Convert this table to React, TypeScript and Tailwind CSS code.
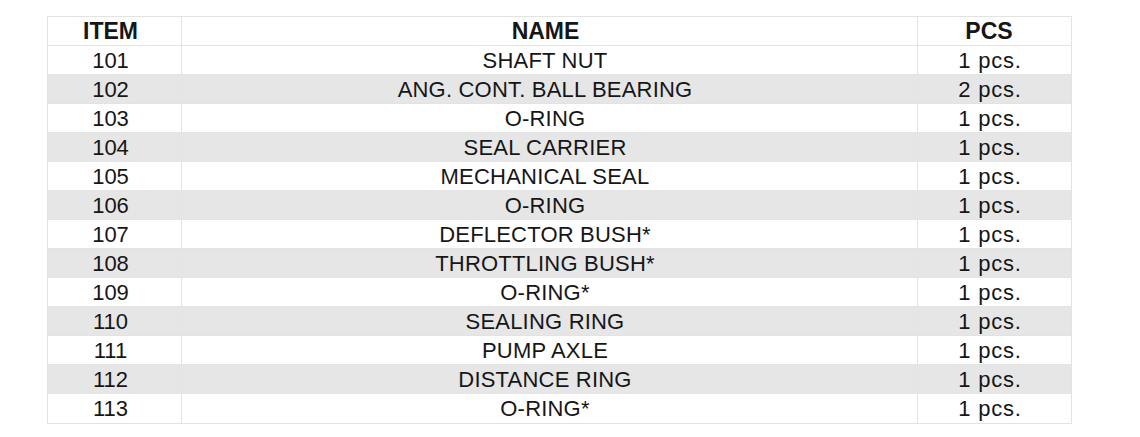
const rows: [string, string, string][] = [
  ['101', 'SHAFT NUT', '1 pcs.'],
  ['102', 'ANG. CONT. BALL BEARING', '2 pcs.'],
  ['103', 'O-RING', '1 pcs.'],
  ['104', 'SEAL CARRIER', '1 pcs.'],
  ['105', 'MECHANICAL SEAL', '1 pcs.'],
  ['106', 'O-RING', '1 pcs.'],
  ['107', 'DEFLECTOR BUSH*', '1 pcs.'],
  ['108', 'THROTTLING BUSH*', '1 pcs.'],
  ['109', 'O-RING*', '1 pcs.'],
  ['110', 'SEALING RING', '1 pcs.'],
  ['111', 'PUMP AXLE', '1 pcs.'],
  ['112', 'DISTANCE RING', '1 pcs.'],
  ['113', 'O-RING*', '1 pcs.'],
]

export default function App() {
  return (
    <div className="w-[1140px] h-[437px] bg-white pt-[16px] pl-[47px] font-['Liberation_Sans',Arial,sans-serif] text-[#161616]">
      <div className="w-[1025px] border border-[#e3e3e4]">
        <div className="grid grid-cols-[134px_736px_1fr] h-[29px] border-b border-[#e3e3e4] text-[23px] font-bold leading-[29px]">
          <div className="text-center pr-[8px] border-r border-[#e3e3e4]">ITEM</div>
          <div className="text-center pr-[8px] border-r border-[#e3e3e4]">NAME</div>
          <div className="text-center pr-[11px]">PCS</div>
        </div>
        {rows.map(([item, name, pcs], i) => (
          <div
            key={item}
            className={`grid grid-cols-[134px_736px_1fr] h-[29px] text-[22px] leading-[29px] ${i % 2 === 1 ? 'bg-[#e6e6e7]' : 'bg-white'} ${i < rows.length - 1 ? 'border-b border-[#e3e3e4]' : ''}`}
          >
            <div className="text-center pr-[8px] border-r border-[#e3e3e4]">{item}</div>
            <div className="text-center pr-[9px] border-r border-[#e3e3e4] tracking-[0.2px]">{name}</div>
            <div className="text-center pr-[9px] tracking-[0.8px]">{pcs}</div>
          </div>
        ))}
      </div>
    </div>
  )
}
